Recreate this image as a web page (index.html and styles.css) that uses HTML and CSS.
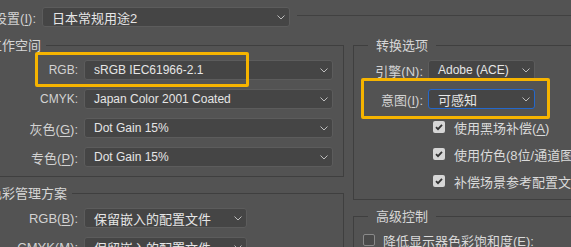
FILE: index.html
```html
<!DOCTYPE html>
<html lang="zh-CN">
<head>
    <meta charset="UTF-8">
    <title>颜色设置</title>
    <link rel="stylesheet" href="styles.css">
</head>
<body>
    <div class="dialog">
        <div class="settings-row">
            <span class="lbl lbl-top">设置(<u>I</u>):</span>
            <div class="select select-top">
                <span class="value">日本常规用途2</span>
                <svg class="chev" width="8" height="5" viewBox="0 0 8 5"><polyline points="0.5,0.5 4,4 7.5,0.5"/></svg>
            </div>
            <div class="rule"></div>
        </div>

        <div class="columns">
            <div class="col-left">
                <fieldset class="group group-left group-work">
                    <legend>工作空间</legend>
                    <div class="row">
                        <span class="lbl latin">RGB:</span>
                        <div class="select">
                            <span class="value latin">sRGB IEC61966-2.1</span>
                            <svg class="chev" width="8" height="5" viewBox="0 0 8 5"><polyline points="0.5,0.5 4,4 7.5,0.5"/></svg>
                        </div>
                        <div class="highlight hl-rgb"></div>
                    </div>
                    <div class="row">
                        <span class="lbl latin">CMYK:</span>
                        <div class="select">
                            <span class="value latin">Japan Color 2001 Coated</span>
                            <svg class="chev" width="8" height="5" viewBox="0 0 8 5"><polyline points="0.5,0.5 4,4 7.5,0.5"/></svg>
                        </div>
                    </div>
                    <div class="row">
                        <span class="lbl">灰色(<u>G</u>):</span>
                        <div class="select">
                            <span class="value latin">Dot Gain 15%</span>
                            <svg class="chev" width="8" height="5" viewBox="0 0 8 5"><polyline points="0.5,0.5 4,4 7.5,0.5"/></svg>
                        </div>
                    </div>
                    <div class="row">
                        <span class="lbl">专色(<u>P</u>):</span>
                        <div class="select">
                            <span class="value latin">Dot Gain 15%</span>
                            <svg class="chev" width="8" height="5" viewBox="0 0 8 5"><polyline points="0.5,0.5 4,4 7.5,0.5"/></svg>
                        </div>
                    </div>
                </fieldset>

                <fieldset class="group group-left group-policy">
                    <legend>色彩管理方案</legend>
                    <div class="row">
                        <span class="lbl">RGB(<u>B</u>):</span>
                        <div class="select">
                            <span class="value">保留嵌入的配置文件</span>
                            <svg class="chev" width="8" height="5" viewBox="0 0 8 5"><polyline points="0.5,0.5 4,4 7.5,0.5"/></svg>
                        </div>
                    </div>
                    <div class="row">
                        <span class="lbl">CMYK(<u>M</u>):</span>
                        <div class="select">
                            <span class="value">保留嵌入的配置文件</span>
                            <svg class="chev" width="8" height="5" viewBox="0 0 8 5"><polyline points="0.5,0.5 4,4 7.5,0.5"/></svg>
                        </div>
                    </div>
                </fieldset>
            </div>

            <div class="col-right">
                <fieldset class="group group-right group-convert">
                    <legend>转换选项</legend>
                    <div class="row">
                        <span class="lbl">引擎(<u>N</u>):</span>
                        <div class="select">
                            <span class="value latin">Adobe (ACE)</span>
                            <svg class="chev" width="8" height="5" viewBox="0 0 8 5"><polyline points="0.5,0.5 4,4 7.5,0.5"/></svg>
                        </div>
                    </div>
                    <div class="row">
                        <span class="lbl">意图(<u>I</u>):</span>
                        <div class="select select-focus">
                            <span class="value">可感知</span>
                            <svg class="chev" width="8" height="5" viewBox="0 0 8 5"><polyline points="0.5,0.5 4,4 7.5,0.5"/></svg>
                        </div>
                        <div class="highlight hl-intent"></div>
                    </div>
                    <div class="check-row">
                        <span class="check checked"><svg width="12" height="12" viewBox="0 0 12 12"><polyline points="3,6.2 5,8.2 9,3.8"/></svg></span>
                        <span>使用黑场补偿(<u>A</u>)</span>
                    </div>
                    <div class="check-row">
                        <span class="check checked"><svg width="12" height="12" viewBox="0 0 12 12"><polyline points="3,6.2 5,8.2 9,3.8"/></svg></span>
                        <span>使用仿色(8位/通道图像)(<u>D</u>)</span>
                    </div>
                    <div class="check-row">
                        <span class="check checked"><svg width="12" height="12" viewBox="0 0 12 12"><polyline points="3,6.2 5,8.2 9,3.8"/></svg></span>
                        <span>补偿场景参考配置文件</span>
                    </div>
                </fieldset>

                <fieldset class="group group-right group-advanced">
                    <legend>高级控制</legend>
                    <div class="check-row">
                        <span class="check"></span>
                        <span>降低显示器色彩饱和度(<u>E</u>):</span>
                    </div>
                </fieldset>
            </div>
        </div>
    </div>
</body>
</html>
```

FILE: styles.css
```css
body {
    margin: 0;
    width: 571px;
    height: 247px;
    overflow: hidden;
    background-color: #535353;
    color: #d2d2d2;
    font-family: 'Liberation Sans', 'Noto Sans CJK SC', sans-serif;
    font-size: 13px;
}

u {
    text-underline-offset: 2px;
}

.latin {
    font-size: 12px;
}

/* whole dialog starts a little left of the visible area */
.dialog {
    margin-left: -20px;
    padding-top: 7px;
}

.settings-row {
    display: flex;
    align-items: center;
    height: 20px;
}

.lbl {
    flex: none;
    text-align: right;
    white-space: nowrap;
}

.lbl-top {
    width: 56px;
    margin-right: 6px;
}

.select-top {
    width: 248px;
}

.rule {
    flex: 1;
    align-self: flex-start;
    margin: 8px 0 0 7px;
    border-top: 1px solid #414141;
}

.select {
    flex: none;
    box-sizing: border-box;
    height: 20px;
    display: flex;
    align-items: center;
    justify-content: space-between;
    padding: 0 4px 0 9px;
    background-color: #454545;
    border: 1px solid #5c5c5c;
    border-radius: 3px;
    color: #e6e6e6;
    white-space: nowrap;
}

.select-focus {
    border-color: #2468cc;
}

.chev {
    flex: none;
}

.chev polyline {
    fill: none;
    stroke: #bdbdbd;
    stroke-width: 1;
}

.columns {
    display: flex;
    align-items: flex-start;
    gap: 9px;
    margin-top: 11px;
}

.col-left {
    flex: none;
    width: 364px;
}

.col-right {
    flex: none;
    width: 240px;
}

.group {
    margin: 0;
    min-width: 0;
    border: 1px solid #3f3f3f;
}

.group legend {
    height: 15px;
    line-height: 15px;
    color: #d6d6d6;
}

.group + .group {
    margin-top: 9px;
}

.group-left {
    padding: 7px 0 9px 8px;
}

.group-left legend {
    padding: 0 5px 0 0;
}

.group-right {
    padding: 7px 0 8px 14px;
}

.group-right legend {
    padding: 0 8px;
}

.row {
    position: relative;
    display: flex;
    align-items: center;
    height: 20px;
}

.row + .row {
    margin-top: 9px;
}

.group-left .lbl {
    width: 89px;
    margin-right: 6px;
}

.group-work .select {
    width: 249px;
}

.group-policy .select {
    width: 163px;
}

.group-right .lbl {
    width: 55px;
    margin-right: 5px;
}

.group-right .select {
    width: 107px;
}

.check-row {
    display: flex;
    align-items: center;
    gap: 9px;
    height: 20px;
    margin: 7px 0 0 65px;
    white-space: nowrap;
    color: #dadada;
}

.row + .check-row {
    margin-top: 8px;
}

.check {
    flex: none;
    box-sizing: border-box;
    width: 12px;
    height: 12px;
    border-radius: 2px;
    border: 1px solid #8a8a8a;
    background-color: #4a4a4a;
}

.check.checked {
    border: none;
    background-color: #d6d6d6;
}

.check svg {
    display: block;
}

.check polyline {
    fill: none;
    stroke: #333333;
    stroke-width: 1.8;
}

.group-advanced {
    padding: 6px 0 8px 9px;
}

.group-advanced legend {
    margin-left: 5px;
}

.group-advanced .check-row {
    margin: 0;
    gap: 8px;
}

/* annotation boxes drawn over the dialog */
.highlight {
    position: absolute;
    box-sizing: border-box;
    border: 3px solid #f6b400;
    border-radius: 2px;
    pointer-events: none;
}

.hl-rgb {
    left: 46px;
    top: -8px;
    width: 214px;
    height: 35px;
}

.hl-intent {
    left: -7px;
    top: -11px;
    width: 189px;
    height: 41px;
}
```
